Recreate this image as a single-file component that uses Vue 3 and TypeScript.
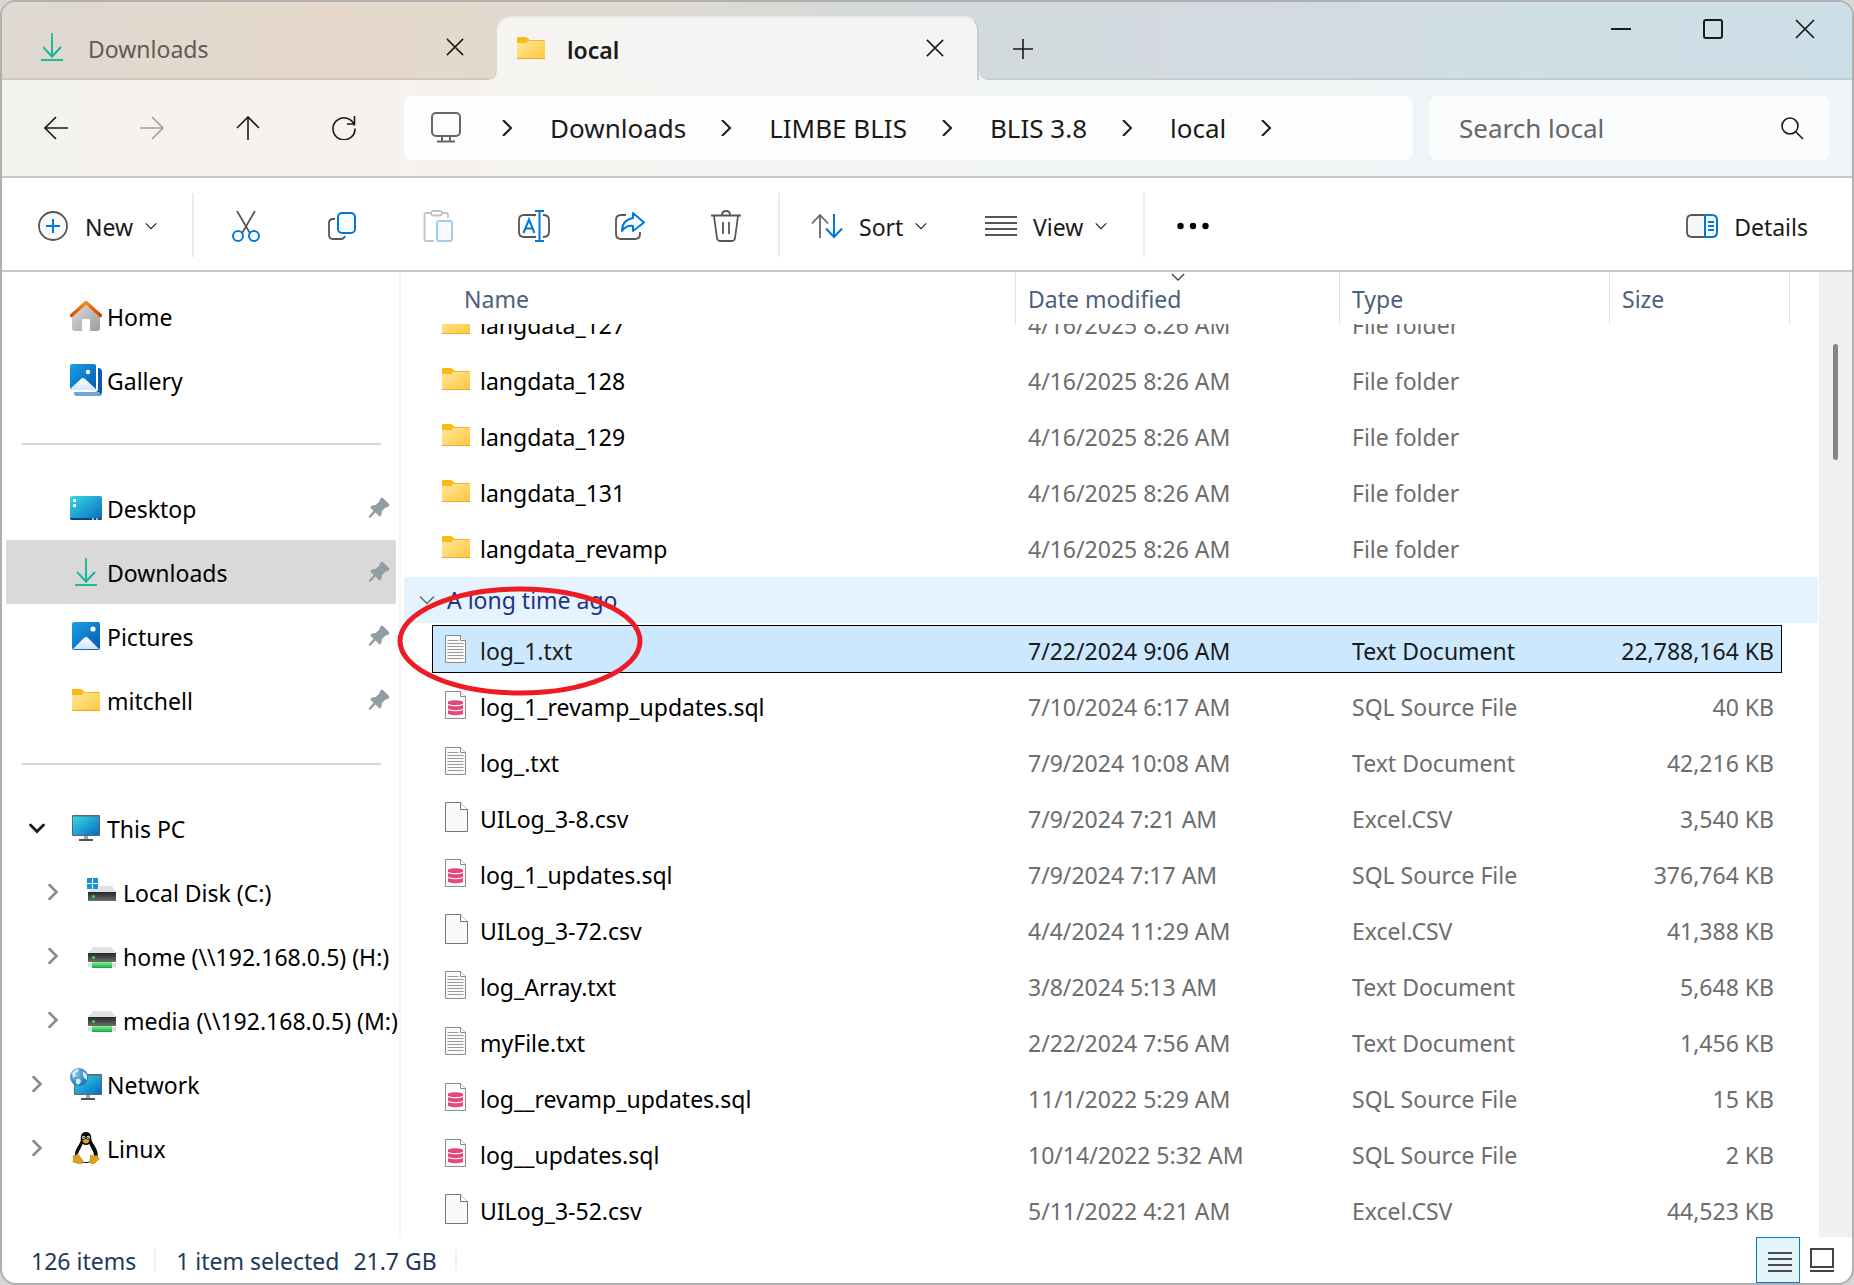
<script setup lang="ts">
import { onMounted, ref } from 'vue'

interface NavItem {
  label: string
  icon: string
  level?: number
  expander?: 'open' | 'closed'
  pinned?: boolean
  active?: boolean
}

interface FileRow {
  name: string
  date: string
  type: string
  size: string
  icon: string
  selected?: boolean
}

const navGroups: NavItem[][] = [
  [
    { label: 'Home', icon: 'home' },
    { label: 'Gallery', icon: 'gallery' },
  ],
  [
    { label: 'Desktop', icon: 'desktop', pinned: true },
    { label: 'Downloads', icon: 'download', pinned: true, active: true },
    { label: 'Pictures', icon: 'pictures', pinned: true },
    { label: 'mitchell', icon: 'folder', pinned: true },
  ],
  [
    { label: 'This PC', icon: 'pc', expander: 'open' },
    { label: 'Local Disk (C:)', icon: 'disk', expander: 'closed', level: 1 },
    { label: 'home (\\\\192.168.0.5) (H:)', icon: 'netdrive', expander: 'closed', level: 1 },
    { label: 'media (\\\\192.168.0.5) (M:)', icon: 'netdrive', expander: 'closed', level: 1 },
    { label: 'Network', icon: 'network', expander: 'closed' },
    { label: 'Linux', icon: 'tux', expander: 'closed' },
  ],
]

const folder = (name: string): FileRow => ({
  name,
  date: '4/16/2025 8:26 AM',
  type: 'File folder',
  size: '',
  icon: 'folder',
})

const kinds: Record<string, [string, string]> = {
  txt: ['Text Document', 'txt'],
  sql: ['SQL Source File', 'sql'],
  csv: ['Excel.CSV', 'blank'],
}

const file = (name: string, date: string, size: string, selected = false): FileRow => {
  const [type, icon] = kinds[name.slice(-3)]
  return { name, date, type, size, icon, selected }
}

const recent: FileRow[] = ['langdata_127', 'langdata_128', 'langdata_129', 'langdata_131', 'langdata_revamp'].map(folder)

const older: FileRow[] = [
  file('log_1.txt', '7/22/2024 9:06 AM', '22,788,164 KB', true),
  file('log_1_revamp_updates.sql', '7/10/2024 6:17 AM', '40 KB'),
  file('log_.txt', '7/9/2024 10:08 AM', '42,216 KB'),
  file('UILog_3-8.csv', '7/9/2024 7:21 AM', '3,540 KB'),
  file('log_1_updates.sql', '7/9/2024 7:17 AM', '376,764 KB'),
  file('UILog_3-72.csv', '4/4/2024 11:29 AM', '41,388 KB'),
  file('log_Array.txt', '3/8/2024 5:13 AM', '5,648 KB'),
  file('myFile.txt', '2/22/2024 7:56 AM', '1,456 KB'),
  file('log__revamp_updates.sql', '11/1/2022 5:29 AM', '15 KB'),
  file('log__updates.sql', '10/14/2022 5:32 AM', '2 KB'),
  file('UILog_3-52.csv', '5/11/2022 4:21 AM', '44,523 KB'),
]

const crumbs = ['Downloads', 'LIMBE BLIS', 'BLIS 3.8', 'local']
const actions = ['cut', 'copy', 'paste', 'rename', 'share', 'delete']

const rows = ref<HTMLElement | null>(null)
onMounted(() => {
  if (rows.value) rows.value.scrollTop = 27
})
</script>

<template>
  <svg class="sprite" aria-hidden="true">
    <defs>
      <linearGradient id="g-fold" x1="0" y1="0" x2="1" y2="1"><stop offset="0" stop-color="#ffe8a0" /><stop offset="1" stop-color="#ffc83a" /></linearGradient>
      <linearGradient id="g-green" x1="0" y1="0" x2="1" y2="1"><stop offset="0" stop-color="#38cf8c" /><stop offset="1" stop-color="#0aa5a0" /></linearGradient>
      <linearGradient id="g-blue" x1="0" y1="0" x2="1" y2="1"><stop offset="0" stop-color="#1ba0e8" /><stop offset="1" stop-color="#0658ac" /></linearGradient>
      <linearGradient id="g-screen" x1="0" y1="0" x2="1" y2="1"><stop offset="0" stop-color="#34dbe4" /><stop offset="1" stop-color="#0b68c0" /></linearGradient>
      <linearGradient id="g-hill" x1="0" y1="0" x2="0" y2="1"><stop offset="0" stop-color="#ffffff" /><stop offset="1" stop-color="#cfe6fa" /></linearGradient>
      <linearGradient id="g-wall" x1="0" y1="0" x2="1" y2="1"><stop offset="0" stop-color="#dedede" /><stop offset="1" stop-color="#9c9c9c" /></linearGradient>
      <linearGradient id="g-roof" x1="0" y1="0" x2="1" y2="0"><stop offset="0" stop-color="#d8500b" /><stop offset="0.5" stop-color="#f58a0c" /><stop offset="1" stop-color="#cc4104" /></linearGradient>
      <linearGradient id="g-drive" x1="0" y1="0" x2="0" y2="1"><stop offset="0" stop-color="#262626" /><stop offset="1" stop-color="#6e6e6e" /></linearGradient>
      <linearGradient id="g-pipe" x1="0" y1="0" x2="0" y2="1"><stop offset="0" stop-color="#7bfa8a" /><stop offset="1" stop-color="#1ea04c" /></linearGradient>
      <radialGradient id="g-globe" cx="0.35" cy="0.35" r="0.7"><stop offset="0" stop-color="#7cc4e8" /><stop offset="1" stop-color="#1b6ea8" /></radialGradient>
    </defs>

    <symbol id="i-folder" viewBox="0 0 32 32">
      <path d="M2 6q0-1 1-1h8l3 2v3l-3 2H2z" fill="#fbb914" />
      <path d="M2 11h9l3-3h16v18.500q0 .5-.5.5h-27q-.5 0-.5-.5z" fill="url(#g-fold)" />
      <path d="M14 8.500h16" stroke="#f4b328" />
      <path d="M2 26.500h28" stroke="#eaa827" />
    </symbol>
    <symbol id="i-download" viewBox="0 0 32 32">
      <path d="M16 2v23M7 16l9 9.500 9-9.500" fill="none" stroke="url(#g-green)" stroke-width="2" />
      <path d="M5 29h22" stroke="#20bd94" stroke-width="2" />
    </symbol>
    <symbol id="i-home" viewBox="0 0 32 32">
      <path d="M2 15 16 3l14 12v13q0 3-3 3h-7V20q0-1-1-1h-6q-1 0-1 1v11H5q-3 0-3-3z" fill="url(#g-wall)" />
      <path d="M1.500 15.500 16 2.500l14.500 13" fill="none" stroke="url(#g-roof)" stroke-width="3.400" stroke-linejoin="round" stroke-linecap="round" />
    </symbol>
    <symbol id="i-gallery" viewBox="0 0 32 32">
      <path d="M28 4q4 0 4 4v20q0 4-4 4H8q-4 0-4-4z" fill="#0b5cab" />
      <path d="M4 28h25l2 2q-1 2-4 2H8q-4 0-4-4z" fill="#6fa6dc" />
      <rect x="-2" y="-2" width="30" height="30" rx="3" fill="#fff" />
      <rect width="26" height="26" rx="2" fill="url(#g-blue)" />
      <path d="M0 25 11.500 14.500q1.500-1 3 0L26 25q0 1-2 1H2q-2 0-2-1z" fill="url(#g-hill)" />
      <circle cx="18" cy="8" r="2.200" fill="#fff" />
    </symbol>
    <symbol id="i-desktop" viewBox="0 0 32 32">
      <rect y="4" width="32" height="24" rx="2" fill="url(#g-screen)" />
      <path d="M0 26h32q0 2-2 2H2q-2 0-2-2z" fill="#0c4668" />
      <path d="M3 7h3v3H3zM3 12h3v3H3z" fill="#fff" />
      <path d="M22 26h2v2h-2zM26 26h2v2h-2z" fill="#8fc3e0" />
    </symbol>
    <symbol id="i-pictures" viewBox="0 0 32 32">
      <rect x="2" y="2" width="28" height="28" rx="2" fill="url(#g-blue)" />
      <path d="M3 29 14.500 17.500q1.500-1.200 3 0L29 29z" fill="url(#g-hill)" />
      <circle cx="23" cy="9" r="2.600" fill="#fff" />
    </symbol>
    <symbol id="i-pc" viewBox="0 0 32 32">
      <rect x="2" y="3" width="28" height="21" rx="1" fill="#5a6672" />
      <rect x="3" y="4.500" width="26" height="18.500" fill="url(#g-screen)" />
      <path d="M14 24h4v3h-4z" fill="#9aa4ae" />
      <path d="M9 27h14v2H9z" fill="#4a545e" />
    </symbol>
    <symbol id="i-disk" viewBox="0 0 32 32">
      <path d="M6 10h20l4 6H2z" fill="#dfe1e4" />
      <rect x="2" y="16" width="28" height="9" fill="url(#g-drive)" />
      <rect x="6" y="19" width="3" height="3" rx="1.500" fill="#3fe04a" />
      <path d="M0 1h13v12H0z" fill="#fff" />
      <path d="M1 2h5v5H1zM7 2h5v5H7zM1 8h5v5H1zM7 8h5v5H7z" fill="#1490df" />
    </symbol>
    <symbol id="i-netdrive" viewBox="0 0 32 32">
      <path d="M7 7h18l5 6H2z" fill="#dfe1e4" />
      <rect x="2" y="13" width="28" height="9" fill="url(#g-drive)" />
      <rect x="6" y="16" width="3" height="3" rx="1.500" fill="#3fe04a" />
      <rect x="2" y="23" width="28" height="4.500" fill="#dcdfe0" />
      <rect x="6" y="22" width="20" height="6" fill="url(#g-pipe)" />
    </symbol>
    <symbol id="i-network" viewBox="0 0 32 32">
      <rect x="4" y="6" width="28" height="21" rx="1" fill="#5a6672" />
      <rect x="5" y="7.500" width="26" height="18.500" fill="url(#g-screen)" />
      <path d="M16 27h4v3h-4z" fill="#9aa4ae" />
      <path d="M11 30h14v2H11z" fill="#4a545e" />
      <circle cx="9" cy="9" r="9" fill="url(#g-globe)" />
      <path d="M2 5q3-4 7-4l-1 3-3 1 1 3-3 2zM6 11l4 0 1 3-3 3-2-2zM13 3l4 4v5l-3-2-1-3z" fill="#d5ecf5" />
    </symbol>
    <symbol id="i-tux" viewBox="0 0 32 32">
      <path d="M16 0c4 0 5.500 3 5.300 7 .2 4 6.500 8.500 6.500 16 0 4-5 8-11.800 8S5 28 5 23C5 16 10.500 12 10.800 8 10.500 3 12 0 16 0z" fill="#0a0a0a" />
      <path d="M12.500 12q3.500 2 7 0c1 4 4.500 7 4.500 12 0 4-3 6-8 6s-8-2-8-6c0-5 3.500-8 4.500-12z" fill="#fff" />
      <circle cx="13.700" cy="5.500" r="1.700" fill="#ddd" /><circle cx="18.300" cy="5.500" r="1.700" fill="#ddd" />
      <circle cx="14" cy="5.700" r=".8" fill="#000" /><circle cx="18" cy="5.700" r=".8" fill="#000" />
      <path d="M12.300 8.500q3.700-3 7.400 0-1 2.500-3.700 3-2.700-.5-3.700-3z" fill="#e0a51c" />
      <path d="M3 24q3 0 4.500-2.500L13 29q0 3-3.500 2.800L3 30q1-3 0-6zM20.500 23q3 2 6 0 .5 2.500 3 3.500-2.500 2-4.500 4.500-3.500 2-5-1z" fill="#dba31b" stroke="#a97a0d" stroke-width=".6" />
    </symbol>
    <symbol id="i-txt" viewBox="0 0 32 32">
      <path d="M5.500 2.500h15l5 5v22h-20z" fill="#fafafa" stroke="#8a8a8a" />
      <path d="M20.500 2.500v5h5" fill="#fff" stroke="#8a8a8a" />
      <path d="M7.500 7.500h11M7.500 10.500h16M7.500 13.500h16M7.500 16.500h16M7.500 19.500h16M7.500 22.500h16M7.500 25.500h16" stroke="#9a9a9a" />
    </symbol>
    <symbol id="i-sql" viewBox="0 0 32 32">
      <path d="M5.500 2.500h15l5 5v22h-20z" fill="#f9fbfa" stroke="#8a8a8a" />
      <path d="M20.500 2.500v5h5" fill="#fff" stroke="#8a8a8a" />
      <path d="M8 12.500Q15.500 10 23 12.500V25q-7.500 2.500-15 0z" fill="#e04a78" />
      <path d="M8 15.500q7.500 2.500 15 0M8 20.500q7.500 2.500 15 0" fill="none" stroke="#fff" stroke-width="1.200" />
    </symbol>
    <symbol id="i-blank" viewBox="0 0 32 32">
      <path d="M5.500 1.500h15l7 7v22h-22z" fill="#fafafa" stroke="#757575" />
      <path d="M20.500 1.500v7h7" fill="#fff" stroke="#757575" />
    </symbol>
    <symbol id="i-pin" viewBox="0 0 22 22">
      <path d="M13 1q1-.8 2 0l6 6q.8 1 0 2-2 1.500-4 2l-3 3q0 3-1.500 5-.8.800-1.600 0L7.500 15.500 2.500 20.500q-1 .5-1.500 0-.5-.5 0-1.500L5.500 14 2.800 11q-.8-.8 0-1.600Q5 8 7.500 8l3.500-3q.5-2.500 2-4z" fill="#929da4" />
    </symbol>

    <symbol id="i-cut" viewBox="0 0 32 32">
      <path d="M7 1 21 25M25 1 11 25" stroke="#555" stroke-width="1.700" fill="none" />
      <circle cx="8" cy="26" r="5" fill="#fff" stroke="#0078d7" stroke-width="2" />
      <circle cx="24" cy="26" r="5" fill="#fff" stroke="#0078d7" stroke-width="2" />
    </symbol>
    <symbol id="i-copy" viewBox="0 0 32 32">
      <path d="M9 9H7Q3 9 3 13v12q0 4 4 4h8q3 0 4-3" fill="none" stroke="#555" stroke-width="1.800" />
      <rect x="12" y="3" width="17" height="20" rx="4" fill="#f8fbff" stroke="#0078d7" stroke-width="2" />
    </symbol>
    <symbol id="i-paste" viewBox="0 0 32 32">
      <path d="M9 3H4Q2.500 3 2.500 5v24q0 2 1.500 2h8M20 3h4.500Q26 3 26 5v3" fill="none" stroke="#c3c3c3" stroke-width="1.800" />
      <rect x="9" y="1" width="11" height="4.500" rx="2.200" fill="#fff" stroke="#c3c3c3" stroke-width="1.800" />
      <rect x="15" y="11" width="15" height="20" rx="2" fill="#f7fbff" stroke="#a0cdf2" stroke-width="2" />
    </symbol>
    <symbol id="i-rename" viewBox="0 0 32 32">
      <path d="M18 5H6Q1 5 1 10v12q0 5 5 5h12M25 5q6 0 6 5v12q0 5-6 5" fill="none" stroke="#555" stroke-width="1.800" />
      <path d="M17 1h9M21.500 1v30M17 31h9" stroke="#0078d7" stroke-width="2" fill="none" />
      <path d="M5.500 23 11 9.500 16.500 23M7.500 18.500h7" stroke="#0078d7" stroke-width="2" fill="none" />
    </symbol>
    <symbol id="i-share" viewBox="0 0 32 32">
      <path d="M12 5H7Q2 5 2 10v14q0 5 5 5h14q5 0 5-5v-2" fill="none" stroke="#555" stroke-width="1.800" />
      <path d="M19 3l11 9.500L19 21v-5q-7-1-11 5 0-11 11-13z" fill="#f8fbff" stroke="#0078d7" stroke-width="2" stroke-linejoin="round" />
    </symbol>
    <symbol id="i-delete" viewBox="0 0 32 32">
      <path d="M1 5.500h30M4 6l3 22q.4 3 3 3h12q2.600 0 3-3l3-22M12 5q0-4 4-4t4 4M13 12v12M19 12v12" fill="none" stroke="#555" stroke-width="1.800" />
    </symbol>
    <symbol id="i-new" viewBox="0 0 32 32">
      <circle cx="16" cy="16" r="14" fill="#f9f9f9" stroke="#555" stroke-width="1.800" />
      <path d="M16 9v14M9 16h14" stroke="#0078d7" stroke-width="2" />
    </symbol>
    <symbol id="i-sort" viewBox="0 0 32 32">
      <path d="M9 28V5M1 13.500 9 5l8 8.500" fill="none" stroke="#666" stroke-width="1.800" />
      <path d="M23 4v23M15 18.500l8 8.500 8-8.500" fill="none" stroke="#0078d7" stroke-width="2" />
    </symbol>
    <symbol id="i-view" viewBox="0 0 32 32">
      <path d="M0 7h32M0 13h32M0 19h32M0 25h32" stroke="#555" stroke-width="2" />
    </symbol>
    <symbol id="i-details" viewBox="0 0 32 32">
      <path d="M19 5H6Q1 5 1 10v12q0 5 5 5h13" fill="#f6f6f6" stroke="#555" stroke-width="1.800" />
      <path d="M19 5h7q5 0 5 5v12q0 5-5 5h-7z" fill="#f4faff" stroke="#0078d7" stroke-width="2" />
      <path d="M22 12h6M22 16h6M22 20h6" stroke="#0078d7" stroke-width="2" />
    </symbol>
    <symbol id="i-monitor" viewBox="0 0 32 32">
      <rect x="2" y="1" width="28" height="23" rx="4" fill="none" stroke="#666" stroke-width="2" />
      <path d="M12 24v5M20 24v5M7 29.500h18" stroke="#666" stroke-width="2" fill="none" />
    </symbol>
    <symbol id="i-back" viewBox="0 0 24 24"><path d="M24 12H1M12 1 1 12l11 11" fill="none" stroke="currentColor" stroke-width="1.600" /></symbol>
    <symbol id="i-forward" viewBox="0 0 24 24"><path d="M0 12h23M12 1l11 11-11 11" fill="none" stroke="currentColor" stroke-width="1.600" /></symbol>
    <symbol id="i-up" viewBox="0 0 24 24"><path d="M12 24V1M1 12 12 1l11 11" fill="none" stroke="currentColor" stroke-width="1.600" /></symbol>
    <symbol id="i-refresh" viewBox="0 0 24 24"><path d="M22.500 9.500A11 11 0 1 0 23 12.500M22.500 0v8H15" fill="none" stroke="currentColor" stroke-width="1.600" /></symbol>
    <symbol id="i-search" viewBox="0 0 24 24"><path d="M15.500 15.500 23 23" stroke="currentColor" stroke-width="1.600" /><circle cx="10" cy="10" r="8" fill="none" stroke="currentColor" stroke-width="1.600" /></symbol>
    <symbol id="i-x" viewBox="0 0 20 20"><path d="M1 1l18 18M19 1 1 19" stroke="currentColor" stroke-width="1.700" /></symbol>
    <symbol id="i-plus" viewBox="0 0 20 20"><path d="M10 0v20M0 10h20" stroke="currentColor" stroke-width="1.600" /></symbol>
    <symbol id="i-min" viewBox="0 0 20 20"><path d="M0 10h20" stroke="currentColor" stroke-width="2" /></symbol>
    <symbol id="i-max" viewBox="0 0 20 20"><rect x="1" y="1" width="18" height="18" rx="2" fill="none" stroke="currentColor" stroke-width="2" /></symbol>
    <symbol id="i-chev" viewBox="0 0 16 16"><path d="M4 0l8 8-8 8" fill="none" stroke="currentColor" stroke-width="2" /></symbol>
    <symbol id="i-chev-bold" viewBox="0 0 16 16"><path d="M4.500 1l7 7-7 7" fill="none" stroke="currentColor" stroke-width="2.600" stroke-linecap="round" /></symbol>
    <symbol id="i-down" viewBox="0 0 16 16"><path d="M1 4.500l7 7 7-7" fill="none" stroke="currentColor" stroke-width="1.500" /></symbol>
    <symbol id="i-down-bold" viewBox="0 0 16 16"><path d="M1.500 5 8 11.500 14.500 5" fill="none" stroke="currentColor" stroke-width="2.800" stroke-linecap="round" /></symbol>
    <symbol id="i-dots" viewBox="0 0 32 32"><circle cx="3.500" cy="16" r="3.200" /><circle cx="16" cy="16" r="3.200" /><circle cx="28.500" cy="16" r="3.200" /></symbol>
    <symbol id="i-large" viewBox="0 0 24 24"><rect x="1" y="1" width="22" height="18" fill="none" stroke="#444" stroke-width="2" /><path d="M0 23h24" stroke="#444" stroke-width="2" /></symbol>
    <symbol id="i-rows" viewBox="0 0 24 24"><path d="M0 5h24M0 11h24M0 17h24M0 23h24" stroke="#4a4a4a" stroke-width="2" /></symbol>
  </svg>

  <div class="window">
    <header class="titlebar">
      <div class="tab">
        <svg class="i32"><use href="#i-download" /></svg>
        <span class="tab-title">Downloads</span>
        <button class="tab-close" aria-label="Close tab"><svg class="i18"><use href="#i-x" /></svg></button>
      </div>
      <div class="tab current">
        <svg class="i32"><use href="#i-folder" /></svg>
        <span class="tab-title">local</span>
        <button class="tab-close" aria-label="Close tab"><svg class="i18"><use href="#i-x" /></svg></button>
      </div>
      <button class="new-tab" aria-label="New tab"><svg class="i20"><use href="#i-plus" /></svg></button>
      <div class="controls">
        <button aria-label="Minimize"><svg class="i20"><use href="#i-min" /></svg></button>
        <button aria-label="Maximize"><svg class="i20"><use href="#i-max" /></svg></button>
        <button aria-label="Close"><svg class="i20"><use href="#i-x" /></svg></button>
      </div>
    </header>

    <nav class="navbar">
      <div class="arrows">
        <button aria-label="Back"><svg class="i24"><use href="#i-back" /></svg></button>
        <button aria-label="Forward" disabled><svg class="i24"><use href="#i-forward" /></svg></button>
        <button aria-label="Up"><svg class="i24"><use href="#i-up" /></svg></button>
        <button aria-label="Refresh"><svg class="i24"><use href="#i-refresh" /></svg></button>
      </div>
      <div class="address">
        <svg class="i32 place"><use href="#i-monitor" /></svg>
        <svg class="i16"><use href="#i-chev" /></svg>
        <template v-for="crumb in crumbs" :key="crumb">
          <a class="crumb" href="#">{{ crumb }}</a>
          <svg class="i16"><use href="#i-chev" /></svg>
        </template>
      </div>
      <div class="search">
        <input type="text" placeholder="Search local" aria-label="Search local" />
        <svg class="i24"><use href="#i-search" /></svg>
      </div>
    </nav>

    <div class="commands">
      <button class="cmd new"><svg class="i32"><use href="#i-new" /></svg><span>New</span><svg class="i12"><use href="#i-down" /></svg></button>
      <span class="rule"></span>
      <div class="icon-actions">
        <button v-for="a in actions" :key="a" :aria-label="a" :disabled="a === 'paste'">
          <svg class="i32"><use :href="'#i-' + a" /></svg>
        </button>
      </div>
      <span class="rule"></span>
      <div class="menus">
        <button class="cmd sort"><svg class="i32"><use href="#i-sort" /></svg><span>Sort</span><svg class="i12"><use href="#i-down" /></svg></button>
        <button class="cmd view"><svg class="i32"><use href="#i-view" /></svg><span>View</span><svg class="i12"><use href="#i-down" /></svg></button>
      </div>
      <span class="rule"></span>
      <button class="more" aria-label="See more"><svg class="i32"><use href="#i-dots" /></svg></button>
      <button class="cmd details"><svg class="i32"><use href="#i-details" /></svg><span>Details</span></button>
    </div>

    <main class="content">
      <aside class="sidebar">
        <ul v-for="(group, g) in navGroups" :key="g" class="nav-group">
          <li v-for="item in group" :key="item.label">
            <a href="#" class="nav-item" :class="{ active: item.active, nested: item.level === 1 }">
              <span class="expander">
                <svg v-if="item.expander === 'open'" class="i16 open"><use href="#i-down-bold" /></svg>
                <svg v-else-if="item.expander" class="i16"><use href="#i-chev-bold" /></svg>
              </span>
              <svg class="i32"><use :href="'#i-' + item.icon" /></svg>
              <span class="nav-label">{{ item.label }}</span>
              <svg v-if="item.pinned" class="pin"><use href="#i-pin" /></svg>
            </a>
          </li>
        </ul>
      </aside>

      <table class="list">
        <thead>
          <tr>
            <th class="h-name" scope="col">Name</th>
            <th scope="col">Date modified<svg class="sort-mark"><use href="#i-down" /></svg></th>
            <th scope="col">Type</th>
            <th scope="col">Size</th>
          </tr>
        </thead>
        <tbody ref="rows">
          <tr v-for="row in recent" :key="row.name">
            <td class="name"><svg class="i32"><use :href="'#i-' + row.icon" /></svg>{{ row.name }}</td>
            <td>{{ row.date }}</td>
            <td>{{ row.type }}</td>
            <td class="size">{{ row.size }}</td>
          </tr>
          <tr class="group-row">
            <th class="group" colspan="4" scope="rowgroup">
              <button><svg class="i16"><use href="#i-down" /></svg>A long time ago</button>
            </th>
          </tr>
          <tr v-for="row in older" :key="row.name" :class="{ selected: row.selected }">
            <td class="name"><svg class="i32"><use :href="'#i-' + row.icon" /></svg>{{ row.name }}</td>
            <td>{{ row.date }}</td>
            <td>{{ row.type }}</td>
            <td class="size">{{ row.size }}</td>
          </tr>
        </tbody>
      </table>
      <div class="scrollbar"><div class="thumb"></div></div>
      <svg class="circle" viewBox="0 0 246 110"><ellipse cx="123" cy="55" rx="120" ry="52" /></svg>
    </main>

    <footer class="status">
      <span class="stat">126 items</span>
      <span class="stat picked"><span>1 item selected</span><span>21.7 GB</span></span>
      <div class="layouts">
        <button class="on" aria-label="Details view"><svg class="i24"><use href="#i-rows" /></svg></button>
        <button aria-label="Large icons view"><svg class="i24"><use href="#i-large" /></svg></button>
      </div>
    </footer>
  </div>
</template>

<style>
body {
  background: #d6d6d6;
}
</style>

<style scoped>
* {
  box-sizing: border-box;
}
.sprite {
  position: absolute;
  width: 0;
  height: 0;
}
.window {
  --chrome: linear-gradient(90deg, #f4f2ef 0, #f6f2ee 22%, #f4f4f1 34%, #f2f4f5 50%, #eff4f5 70%, #eff4f8 100%);
  display: flex;
  flex-direction: column;
  height: 100vh;
  border: 2px solid #b0b0b0;
  border-radius: 16px;
  overflow: hidden;
  background: #fff;
  color: #1a1a1a;
  font: 23px/32px "Noto Sans", "Open Sans", sans-serif;
}
svg {
  display: block;
  flex: none;
}
button {
  display: flex;
  align-items: center;
  justify-content: center;
  padding: 0;
  border: 0;
  background: none;
  color: inherit;
  font: inherit;
}
a {
  color: inherit;
  text-decoration: none;
}
.i12 { width: 12px; height: 12px; }
.i16 { width: 16px; height: 16px; }
.i18 { width: 18px; height: 18px; }
.i20 { width: 20px; height: 20px; }
.i24 { width: 24px; height: 24px; }
.i32 { width: 32px; height: 32px; }

/* title bar and tabs */
.titlebar {
  display: flex;
  flex: none;
  height: 78px;
  background: linear-gradient(90deg, #dfd9d2 0, #e5d8ca 18%, #e1dad0 30%, #dcdad3 38%, #d2dadb 50%, #d4dae2 68%, #d0dee4 80%, #ccdee7 100%);
  box-shadow: inset 0 -2px #c4ced1;
}
.tab {
  display: flex;
  align-items: center;
  width: 495px;
  padding: 14px 26px 0 34px;
  border-bottom: 2px solid #d2c8bc;
  color: #5f5b56;
}
.tab-title {
  flex: 1;
  padding: 4px 0 0 20px;
}
.tab-close {
  width: 36px;
  height: 36px;
  margin-right: -2px;
  color: #1a1a1a;
}
.current {
  position: relative;
  width: 482px;
  margin-top: 14px;
  padding: 0 26px 2px 18px;
  border: 2px solid #c4ced1;
  border-width: 2px 2px 0 0;
  border-top-color: #e9e8e4;
  border-radius: 14px 14px 0 0;
  background: linear-gradient(90deg, #f5f4f1, #f4f4f2 40%, #f2f4f6);
  color: #1a1a1a;
  font-weight: 600;
}
.current::before,
.current::after {
  content: "";
  position: absolute;
  bottom: 0;
  width: 8px;
  height: 8px;
}
.current::before {
  left: -8px;
  background: radial-gradient(circle at 0 0, #e1d9ce 6px, #d2c8bc 7px, #f5f3f0 8px);
}
.current::after {
  right: -10px;
  background: radial-gradient(circle at 8px 0, #d2dadb 6px, #c4ced1 7px, #f2f4f5 8px);
}
.new-tab {
  width: 88px;
  padding-top: 16px;
}
.controls {
  display: flex;
  margin-left: auto;
  padding-right: 1px;
}
.controls button {
  width: 92px;
  height: 54px;
}

/* navigation row */
.navbar {
  display: flex;
  flex: none;
  height: 98px;
  padding: 16px 22px 16px 6px;
  border-bottom: 2px solid #c3c9ca;
  background: var(--chrome);
}
.arrows {
  display: flex;
  margin-right: 12px;
}
.arrows button {
  width: 96px;
}
.arrows button:disabled {
  color: #a3a19e;
}
.address {
  display: flex;
  flex: 1;
  align-items: center;
  margin-right: 16px;
  padding-left: 26px;
  border-radius: 8px;
  background: #fcfdfc;
  font-size: 26px;
}
.place {
  margin-right: 37px;
}
.crumb {
  padding: 0 32px 0 35px;
}
.search {
  display: flex;
  align-items: center;
  width: 401px;
  padding: 0 26px 0 30px;
  border-radius: 8px;
  background: #fbfcfe;
}
.search input {
  flex: 1;
  min-width: 0;
  padding: 0;
  border: 0;
  outline: 0;
  background: none;
  font: inherit;
  font-size: 26px;
}
.search input::placeholder {
  color: #666;
  opacity: 1;
}

/* command row */
.commands {
  display: flex;
  flex: none;
  align-items: center;
  height: 94px;
  padding-top: 2px;
  border-bottom: 2px solid #c3c9ca;
}
.commands button {
  height: 64px;
  padding-top: 2px;
}
.rule {
  width: 2px;
  height: 64px;
  background: #ebebeb;
}
.cmd {
  justify-content: flex-start;
  gap: 12px;
}
.cmd span {
  padding: 2px 0 0 4px;
}
.new {
  width: 190px;
  padding-left: 35px;
}
.icon-actions,
.menus {
  display: flex;
}
.icon-actions {
  padding: 0 4px;
}
.icon-actions button {
  width: 96px;
}
.menus {
  padding-left: 31px;
}
.sort {
  width: 174px;
}
.view {
  width: 158px;
}
.more {
  width: 96px;
}
.details {
  margin-left: auto;
  margin-right: 44px;
}

/* folder tree */
.content {
  position: relative;
  display: flex;
  flex: 1;
  min-height: 0;
}
.sidebar {
  flex: none;
  width: 399px;
  padding: 12px 3px 0 4px;
  border-right: 2px solid #f5f5f5;
  color: #000;
}
.nav-group {
  margin: 0;
  padding: 0;
  list-style: none;
}
.nav-group + .nav-group::before {
  content: "";
  display: block;
  height: 2px;
  margin: 31px 15px 31px 16px;
  background: #d6d6d6;
}
.nav-item {
  display: flex;
  align-items: center;
  height: 64px;
  padding-right: 6px;
  border-radius: 2px;
  white-space: nowrap;
}
.nav-item.active {
  background: #d9d9d9;
}
.expander {
  flex: none;
  width: 41px;
  margin-right: 23px;
  padding-left: 23px;
  color: #8a8a8a;
}
.nested .expander {
  margin-left: 16px;
}
.open {
  color: #1a1a1a;
}
.nav-label {
  flex: 1;
  padding: 2px 0 0 5px;
}
.pin {
  width: 22px;
  height: 22px;
}

/* file table: fixed head, body scrolls underneath */
.list {
  display: flex;
  flex: 1;
  flex-direction: column;
  min-width: 0;
  color: #6d6d6d;
}
.list thead,
.list tbody {
  display: block;
}
.list tbody {
  flex: 1;
  min-height: 0;
  overflow: hidden;
}
.list tr {
  display: grid;
  grid-template-columns: 1fr 324px 270px 180px;
  padding-right: 29px;
}
.list th {
  padding: 0;
  font-weight: 400;
  text-align: left;
}
.list thead th {
  position: relative;
  height: 52px;
  padding: 11px 0 0 12px;
  border-right: 1px solid #e2e2e2;
  color: #4c607a;
}
.list thead .h-name {
  padding-left: 63px;
}
.sort-mark {
  position: absolute;
  top: -2px;
  left: 50%;
  width: 14px;
  height: 14px;
  margin-left: -7px;
  color: #444;
}
.list td {
  display: flex;
  align-items: center;
  height: 48px;
  margin: 2px 0 6px;
  padding: 4px 0 0 12px;
  border: 0 solid #000;
  white-space: nowrap;
}
.list td.name {
  gap: 8px;
  margin-left: 31px;
  padding-left: 8px;
  color: #000;
}
.name svg {
  margin-top: -4px;
}
.list td.size {
  justify-content: flex-end;
  margin-right: 8px;
  padding-right: 8px;
}
.list .selected td {
  border-width: 1px 0;
  background: #cce8ff;
  color: #1a1a1a;
}
.list .selected .name {
  padding-left: 7px;
  border-left-width: 1px;
}
.list .selected .size {
  padding-right: 7px;
  border-right-width: 1px;
}
.list .group-row {
  padding-right: 0;
}
.list .group {
  grid-column: 1 / -1;
  padding: 0 1px 0 3px;
}
.group button {
  justify-content: flex-start;
  gap: 12px;
  width: 100%;
  height: 46px;
  padding: 0 0 1px 15px;
  border-radius: 2px;
  background: #e5f3ff;
  color: #1e3287;
}
.group svg {
  color: #666;
}
.scrollbar {
  flex: none;
  width: 33px;
  padding: 72px 14px 0;
  background: #f0f0f0;
}
.thumb {
  height: 116px;
  border-radius: 3px;
  background: #868686;
}
.circle {
  position: absolute;
  top: 314px;
  left: 395px;
  width: 246px;
  height: 110px;
  fill: none;
  stroke: #ed1c24;
  stroke-width: 5px;
}

/* status row */
.status {
  display: flex;
  flex: none;
  align-items: center;
  height: 46px;
  padding-left: 29px;
  color: #1e395b;
}
.stat {
  height: 22px;
  padding-right: 18px;
  border-right: 2px solid #f0f0f0;
  line-height: 24px;
}
.picked {
  display: flex;
  gap: 14px;
  padding-left: 20px;
}
.layouts {
  display: flex;
  margin-left: auto;
  padding-right: 8px;
}
.layouts button {
  width: 44px;
  height: 46px;
}
.layouts .on {
  padding-left: 4px;
  border: 1px solid #0078d7;
  background: #e5f3fb;
}
</style>
